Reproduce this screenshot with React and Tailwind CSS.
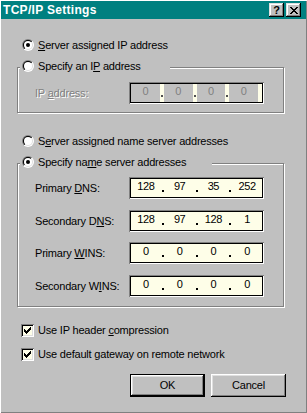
import React, { Fragment } from "react";

const CREAM = "bg-[#fefee8]";

function U({ children }) {
  return <span className="underline underline-offset-[1px]">{children}</span>;
}

function Radio({ checked }) {
  return (
    <svg width="12" height="12" viewBox="0 0 12 12" className="shrink-0">
      <defs>
        <linearGradient id="rgo" x1="0" y1="0" x2="1" y2="1">
          <stop offset="0.5" stopColor="#808080" />
          <stop offset="0.5" stopColor="#ffffff" />
        </linearGradient>
        <linearGradient id="rgi" x1="0" y1="0" x2="1" y2="1">
          <stop offset="0.5" stopColor="#000000" />
          <stop offset="0.5" stopColor="#dfdfdf" />
        </linearGradient>
      </defs>
      <circle cx="6" cy="6" r="6" fill="url(#rgo)" />
      <circle cx="6" cy="6" r="5" fill="url(#rgi)" />
      <circle cx="6" cy="6" r="4" fill="#ffffff" />
      {checked && <circle cx="6" cy="6" r="2" fill="#000000" />}
    </svg>
  );
}

function Check() {
  return (
    <div className="w-[13px] h-[13px] shrink-0 bg-[#fefee8] shadow-[inset_1px_1px_#808080,inset_-1px_-1px_#ffffff,inset_2px_2px_#000000,inset_-2px_-2px_#dfdfdf]">
      <svg width="13" height="13" viewBox="0 0 13 13" shapeRendering="crispEdges">
        <path
          fill="#000"
          d="M9 3h1v1h-1z M8 4h2v1h-2z M3 5h1v1h-1z M7 5h3v1h-3z M3 6h2v1h-2z M6 6h3v1h-3z M3 7h5v1h-5z M4 8h3v1h-3z M5 9h1v1h-1z"
        />
      </svg>
    </div>
  );
}

function CapBtn({ children }) {
  return (
    <div className="w-[15px] h-[14px] bg-[#c0c0c0] flex items-center justify-center shadow-[inset_-1px_-1px_#000000,inset_1px_1px_#dfdfdf,inset_-2px_-2px_#808080,inset_2px_2px_#ffffff]">
      {children}
    </div>
  );
}

function XGlyph() {
  return (
    <svg width="8" height="7" viewBox="0 0 8 7" shapeRendering="crispEdges" className="mt-[1px]">
      <path
        fill="#000"
        d="M0 0h2v1h-2z M6 0h2v1h-2z M1 1h2v1h-2z M5 1h2v1h-2z M2 2h4v1h-4z M3 3h2v1h-2z M2 4h4v1h-4z M1 5h2v1h-2z M5 5h2v1h-2z M0 6h2v1h-2z M6 6h2v1h-2z"
      />
    </svg>
  );
}

function IPField({ values, disabled }) {
  return (
    <div className="w-[135px] h-[22px] shrink-0 p-[2px] shadow-[inset_1px_1px_#808080,inset_-1px_-1px_#ffffff,inset_2px_2px_#000000,inset_-2px_-2px_#000000]">
      <div className={"flex h-full " + (disabled ? "bg-[#c0c0c0] text-[#808080]" : "bg-[#fefee8] text-black")}>
        {values.map((v, i) => (
          <Fragment key={i}>
            <span className="flex-1 flex items-center justify-center pb-[4px] tracking-[-0.4px]">{v}</span>
            {i < 3 && (
              <span className="w-[4px] flex items-end justify-center pb-[5px] bg-[#fefee8]">
                <span className={"w-[2px] h-[2px] " + (disabled ? "bg-[#505050]" : "bg-black")} />
              </span>
            )}
          </Fragment>
        ))}
        {disabled && <span className="w-[4px] bg-[#fefee8]" />}
      </div>
    </div>
  );
}

function FieldRow({ label, values, disabled, className }) {
  return (
    <div className={"flex items-center pl-[17px] " + className}>
      <span
        className={
          "w-[94px] " + (disabled ? "text-[#808080] [text-shadow:1px_1px_#ffffff]" : "")
        }
      >
        {label}
      </span>
      <IPField values={values} disabled={disabled} />
    </div>
  );
}

function Button({ children, isDefault }) {
  if (isDefault) {
    return (
      <div className="w-[75px] h-[23px] border border-black">
        <div className="w-full h-full bg-[#c0c0c0] flex items-center justify-center shadow-[inset_-1px_-1px_#000000,inset_1px_1px_#ffffff,inset_-2px_-2px_#808080,inset_2px_2px_#dfdfdf]">
          {children}
        </div>
      </div>
    );
  }
  return (
    <div className="w-[75px] h-[23px] bg-[#c0c0c0] flex items-center justify-center shadow-[inset_-1px_-1px_#000000,inset_1px_1px_#ffffff,inset_-2px_-2px_#808080,inset_2px_2px_#dfdfdf]">
      {children}
    </div>
  );
}

export default function App() {
  return (
    <div className="w-[307px] h-[413px] bg-[#c0c0c0] flex flex-col font-['Liberation_Sans',Arial,sans-serif] text-[11px] leading-[13px] tracking-[-0.2px] text-black shadow-[inset_1px_1px_#ffffff,inset_-1px_-1px_#808080] overflow-hidden">
      {/* Title bar */}
      <div className="mx-[1px] mt-[1px] h-[18px] bg-[#008080] flex items-center pl-[2px] pr-[5px] shrink-0">
        <span className="flex-1 text-white font-bold text-[12px] tracking-[0.3px] leading-none">
          TCP/IP Settings
        </span>
        <div className="flex gap-[2px]">
          <CapBtn>
            <span className="text-[11px] font-bold leading-none tracking-normal">?</span>
          </CapBtn>
          <CapBtn>
            <XGlyph />
          </CapBtn>
        </div>
      </div>

      {/* Radio 1 */}
      <div className="mt-[18px] pl-[22px] h-[16px] flex items-center">
        <Radio checked />
        <span className="ml-[4px]">
          <U>S</U>erver assigned IP address
        </span>
      </div>

      {/* Group 1 */}
      <div className="ml-[17px] mt-[14px] w-[267px] border border-[#808080] shadow-[inset_1px_1px_#ffffff,1px_1px_#ffffff] pb-[8px]">
        <div className="-mt-[10px] ml-[2px] w-[150px] h-[16px] pl-[2px] bg-[#c0c0c0] flex items-center">
          <Radio />
          <span className="ml-[4px]">
            Specify an I<U>P</U> address
          </span>
        </div>
        <FieldRow
          className="mt-[8px]"
          disabled
          label={
            <>
              IP <U>a</U>ddress:
            </>
          }
          values={["0", "0", "0", "0"]}
        />
      </div>

      {/* Radio 3 */}
      <div className="mt-[20px] pl-[22px] h-[16px] flex items-center">
        <Radio />
        <span className="ml-[4px]">
          S<U>e</U>rver assigned name server addresses
        </span>
      </div>

      {/* Group 2 */}
      <div className="ml-[17px] mt-[14px] w-[267px] border border-[#808080] shadow-[inset_1px_1px_#ffffff,1px_1px_#ffffff] pb-[9px]">
        <div className="-mt-[10px] ml-[2px] w-[192px] h-[16px] pl-[2px] bg-[#c0c0c0] flex items-center">
          <Radio checked />
          <span className="ml-[4px]">
            Specify na<U>m</U>e server addresses
          </span>
        </div>
        <FieldRow
          className="mt-[7px]"
          label={
            <>
              Primary <U>D</U>NS:
            </>
          }
          values={["128", "97", "35", "252"]}
        />
        <FieldRow
          className="mt-[11px]"
          label={
            <>
              Secondary D<U>N</U>S:
            </>
          }
          values={["128", "97", "128", "1"]}
        />
        <FieldRow
          className="mt-[10px]"
          label={
            <>
              Primary <U>W</U>INS:
            </>
          }
          values={["0", "0", "0", "0"]}
        />
        <FieldRow
          className="mt-[11px]"
          label={
            <>
              Secondary W<U>I</U>NS:
            </>
          }
          values={["0", "0", "0", "0"]}
        />
      </div>

      {/* Checkboxes */}
      <div className="mt-[15px] pl-[21px] h-[16px] flex items-center">
        <Check />
        <span className="ml-[4px]">
          Use IP header <U>c</U>ompression
        </span>
      </div>
      <div className="mt-[8px] pl-[21px] h-[16px] flex items-center">
        <Check />
        <span className="ml-[4px]">
          Use default <U>g</U>ateway on remote network
        </span>
      </div>

      {/* Buttons */}
      <div className="mt-[12px] flex justify-end gap-[6px] pr-[21px]">
        <Button isDefault>OK</Button>
        <Button>Cancel</Button>
      </div>
    </div>
  );
}
